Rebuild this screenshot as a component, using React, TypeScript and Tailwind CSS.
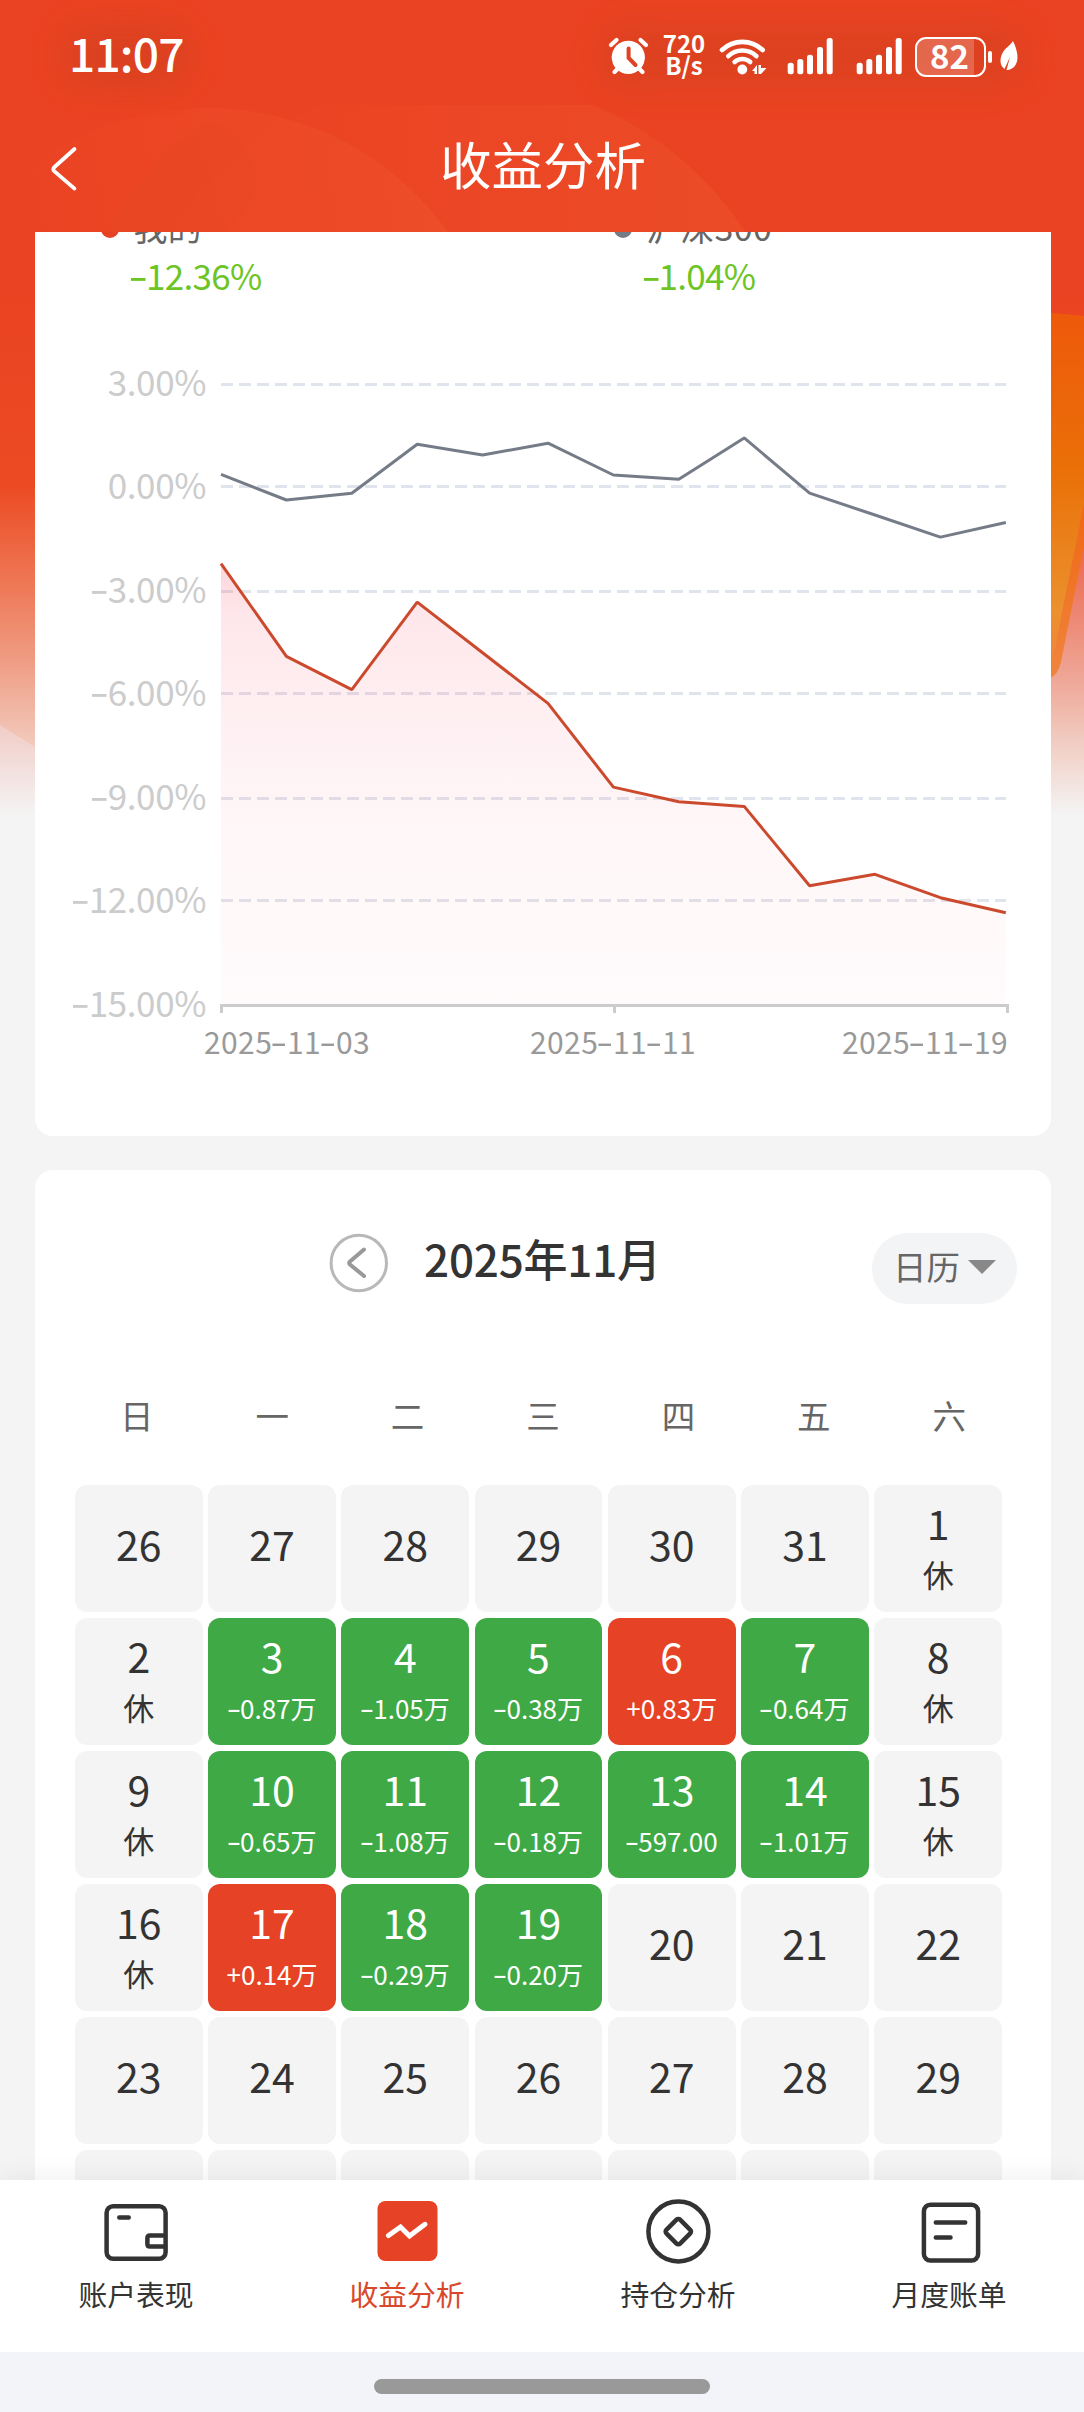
import React from "react";

const GRID = [
  { y: 384.5, label: "3.00%" },
  { y: 486.5, label: "0.00%" },
  { y: 591.5, label: "-3.00%" },
  { y: 693.5, label: "-6.00%" },
  { y: 798.5, label: "-9.00%" },
  { y: 900.5, label: "-12.00%" },
  { y: 1005.5, label: "-15.00%" },
];
const INDEX_Y = [474.3, 500, 493.2, 444.3, 455, 443.2, 475, 479.3, 437.9, 493.2, 515, 537.1, 522.5];
const MINE_Y = [563.6, 656.4, 689.6, 602.1, 652.8, 703.4, 787.1, 801.8, 806.4, 885.7, 874.3, 897.7, 912.7];
const toPoints = (ys: number[]) => ys.map((y, i) => `${(221 + i * 65.4).toFixed(1)},${y}`).join(" ");

const WEEKDAYS = ["日", "一", "二", "三", "四", "五", "六"];

type Day = { d: number; note?: string };
const DAYS: Day[] = [
  { d: 26 }, { d: 27 }, { d: 28 }, { d: 29 }, { d: 30 }, { d: 31 }, { d: 1, note: "休" },
  { d: 2, note: "休" }, { d: 3, note: "-0.87万" }, { d: 4, note: "-1.05万" }, { d: 5, note: "-0.38万" }, { d: 6, note: "+0.83万" }, { d: 7, note: "-0.64万" }, { d: 8, note: "休" },
  { d: 9, note: "休" }, { d: 10, note: "-0.65万" }, { d: 11, note: "-1.08万" }, { d: 12, note: "-0.18万" }, { d: 13, note: "-597.00" }, { d: 14, note: "-1.01万" }, { d: 15, note: "休" },
  { d: 16, note: "休" }, { d: 17, note: "+0.14万" }, { d: 18, note: "-0.29万" }, { d: 19, note: "-0.20万" }, { d: 20 }, { d: 21 }, { d: 22 },
  { d: 23 }, { d: 24 }, { d: 25 }, { d: 26 }, { d: 27 }, { d: 28 }, { d: 29 },
];

/* Hyphens are set in Inter and stretched a little, to read as a full-width minus. */
function Num({ text }: { text: string }) {
  return (
    <>
      {text.split(/(-)/).map((part, i) =>
        part === "-" ? (
          <span key={i} className="mr-[0.02em] inline-block scale-x-130 font-['Inter',sans-serif] leading-none">-</span>
        ) : (
          part
        )
      )}
    </>
  );
}

function Backdrop() {
  return (
    <svg className="absolute inset-0" width="1084" height="820" viewBox="0 0 1084 820">
      <defs>
        <linearGradient id="bg" x1="0" y1="0" x2="0" y2="820" gradientUnits="userSpaceOnUse">
          <stop offset="0" stopColor="#ea4323" />
          <stop offset="0.35" stopColor="#ea4323" />
          <stop offset="0.59" stopColor="#eb4a22" />
          <stop offset="0.7" stopColor="#ee7350" />
          <stop offset="0.8" stopColor="#ef9a80" />
          <stop offset="0.9" stopColor="#f2c6b8" />
          <stop offset="1" stopColor="#f4f4f4" />
        </linearGradient>
        <linearGradient id="fade" x1="0" y1="720" x2="0" y2="815" gradientUnits="userSpaceOnUse">
          <stop offset="0" stopColor="#f1cac3" />
          <stop offset="1" stopColor="#f4f4f4" />
        </linearGradient>
        <linearGradient id="rightFade" x1="0" y1="480" x2="0" y2="815" gradientUnits="userSpaceOnUse">
          <stop offset="0" stopColor="#ea4a2c" />
          <stop offset="0.3" stopColor="#ec7660" />
          <stop offset="0.6" stopColor="#efa898" />
          <stop offset="0.8" stopColor="#f1d0c6" />
          <stop offset="1" stopColor="#f4f4f4" />
        </linearGradient>
        <linearGradient id="band" x1="0" y1="313" x2="0" y2="677" gradientUnits="userSpaceOnUse">
          <stop offset="0" stopColor="#ee590b" />
          <stop offset="0.5" stopColor="#ef6512" />
          <stop offset="1" stopColor="#f0853d" />
        </linearGradient>
        <linearGradient id="bandInner" x1="0" y1="313" x2="0" y2="650" gradientUnits="userSpaceOnUse">
          <stop offset="0" stopColor="#ee590b" />
          <stop offset="0.47" stopColor="#ea7008" />
          <stop offset="0.88" stopColor="#eb912d" />
          <stop offset="1" stopColor="#ef873a" />
        </linearGradient>
        <linearGradient id="disc" x1="0" y1="232" x2="448" y2="150" gradientUnits="userSpaceOnUse">
          <stop offset="0" stopColor="#f2502f" stopOpacity="0" />
          <stop offset="1" stopColor="#f25a30" stopOpacity="0.4" />
        </linearGradient>
        <linearGradient id="discWide" x1="310" y1="0" x2="746" y2="0" gradientUnits="userSpaceOnUse">
          <stop offset="0" stopColor="#f2502f" stopOpacity="0.08" />
          <stop offset="1" stopColor="#ee5a2c" stopOpacity="0.4" />
        </linearGradient>
        <filter id="soft" x="-40%" y="-80%" width="180%" height="260%">
          <feGaussianBlur stdDeviation="16" />
        </filter>
        <clipPath id="below"><rect x="0" y="105" width="1084" height="127" /></clipPath>
      </defs>
      <rect width="1084" height="820" fill="url(#bg)" />
      <g clipPath="url(#below)">
        <circle cx="457" cy="423" r="346" fill="url(#discWide)" />
        <circle cx="207" cy="404" r="296" fill="url(#disc)" />
        <path d="M107 232C128 190 165 145 205 125H225C250 145 260 180 255 192C250 207 232 220 222 232Z" fill="#e04a22" opacity="0.13" />
      </g>
      <rect x="62" y="26" width="128" height="60" rx="28" fill="#c53f1c" opacity="0.42" filter="url(#soft)" />
      <rect x="600" y="26" width="425" height="60" rx="28" fill="#cc3f1c" opacity="0.45" filter="url(#soft)" />
      <path d="M0 725L35 747V820H0Z" fill="url(#fade)" />
      <rect x="1050" y="480" width="34" height="340" fill="url(#rightFade)" />
      <path d="M1050 313L1084 316V546L1061 662Q1058 675 1050 678Z" fill="url(#band)" />
      <path d="M1050 313L1084 316V504L1061 617L1054 655H1050Z" fill="url(#bandInner)" />
    </svg>
  );
}

function SignalBars() {
  return (
    <svg width="46" height="38" viewBox="787 37 46 38" fill="#fff">
      <rect x="787.7" y="62.7" width="6" height="11.5" rx="2.5" />
      <rect x="797.3" y="59" width="6" height="15.2" rx="2.5" />
      <rect x="807" y="54.7" width="6" height="19.5" rx="2.5" />
      <rect x="817" y="47" width="6" height="27.2" rx="2.5" />
      <rect x="826.7" y="38" width="6" height="36.2" rx="2.5" />
    </svg>
  );
}

function StatusBar() {
  return (
    <div className="flex h-[105px] items-start text-white">
      <div className="ml-[69px] mt-[22px] w-[539px] text-[46px] font-medium leading-[60px] tracking-[-0.8px]">11:07</div>
      <svg className="mt-[36px]" width="42" height="40" viewBox="608 36 42 40">
        <circle cx="628.3" cy="57.3" r="16.6" fill="#fff" />
        <path d="M611 45L616.5 40M646 45L640.5 40" stroke="#fff" strokeWidth="4.2" strokeLinecap="round" />
        <path d="M614.5 72L619 67.5M642.5 72L638 67.5" stroke="#fff" strokeWidth="4.2" strokeLinecap="round" />
        <path d="M628.6 48.5V58L635.5 65" stroke="#df4323" strokeWidth="4" fill="none" strokeLinecap="round" />
      </svg>
      <div className="ml-[11px] mt-[31px] flex w-[46px] flex-col items-center text-[24px] font-bold leading-[23px]">
        <span>720</span>
        <span className="-mt-px">B/s</span>
      </div>
      <svg className="ml-[11px] mt-[36px]" width="52" height="40" viewBox="718 36 52 40">
        <g fill="none" stroke="#fff" strokeWidth="4.6" strokeLinecap="round">
          <path d="M722 50A29.5 29.5 0 0 1 762.7 50" />
          <path d="M728.3 56.2A20.3 20.3 0 0 1 756.4 56.2" />
          <path d="M734.6 62A11.6 11.6 0 0 1 750.2 62" />
        </g>
        <circle cx="742.3" cy="69.5" r="4.9" fill="#fff" />
        <path d="M752 71L757 65V74H754.5V71ZM758.5 65H761V68H766.5L761 74H758.5Z" fill="#fff" />
      </svg>
      <div className="ml-[17px] mt-[37px]"><SignalBars /></div>
      <div className="ml-[22.5px] mt-[37px]"><SignalBars /></div>
      <div className="ml-[13px] mt-[37px] flex h-[40px] w-[71px] items-center justify-center rounded-[11px] border-[2.5px] border-white bg-linear-to-r from-white/20 from-85% to-transparent to-85% text-[33px] font-bold leading-[40px]">
        <span className="-mt-[5px] -ml-[1px]">82</span>
      </div>
      <div className="ml-[2px] mt-[51px] h-[12px] w-[4px] rounded-[2px] bg-white" />
      <svg className="ml-[7px] mt-[40px]" width="21" height="32" viewBox="999 40 21 32">
        <path d="M1013 41C1017 49 1019 58 1016 64C1014 68 1010 70 1006.500 70L1010 57L1004.500 69C1000 66 999.500 60 1002 54C1004.500 48 1010 46 1013 41Z" fill="#fff" />
      </svg>
    </div>
  );
}

function Chart() {
  return (
    <div>
      <div className="flex">
        <div className="w-[171px] pt-[18.5px] text-right text-[35px] tracking-[-0.4px] text-[#cccccc]">
          {GRID.map((g) => (
            <div key={g.label} className="h-[103.5px] whitespace-nowrap leading-[103.5px]"><Num text={g.label} /></div>
          ))}
        </div>
        <svg className="block" width="845" height="710" viewBox="206 310 845 710">
          <defs>
            <linearGradient id="area" x1="0" y1="563" x2="0" y2="1005" gradientUnits="userSpaceOnUse">
              <stop offset="0" stopColor="#f95570" stopOpacity="0.25" />
              <stop offset="0.12" stopColor="#f95570" stopOpacity="0.14" />
              <stop offset="0.35" stopColor="#f95570" stopOpacity="0.09" />
              <stop offset="0.6" stopColor="#f95570" stopOpacity="0.05" />
              <stop offset="1" stopColor="#f95570" stopOpacity="0.025" />
            </linearGradient>
          </defs>
          {GRID.slice(0, 6).map((g) => (
            <line key={g.label} x1="221" x2="1006" y1={g.y} y2={g.y} stroke="#e0e4ed" strokeWidth="3" strokeDasharray="12 6" />
          ))}
          <polygon points={`221,1005 ${toPoints(MINE_Y)} 1005.8,1005`} fill="url(#area)" />
          <path d="M221.500 1013V1005.500H1007.500V1013M614.500 1005.500V1013" fill="none" stroke="#cccccc" strokeWidth="3" />
          <polyline points={toPoints(INDEX_Y)} fill="none" stroke="#757b87" strokeWidth="3" strokeLinejoin="bevel" />
          <polyline points={toPoints(MINE_Y)} fill="none" stroke="#cb4a2d" strokeWidth="3" strokeLinejoin="bevel" />
        </svg>
      </div>
      <div className="-mt-[32px] flex h-[40px] justify-between pl-[169px] pr-[43px] text-[30px] leading-[40px] tracking-[0.4px] text-[#999999]">
        <span><Num text="2025-11-03" /></span>
        <span className="pl-[14px]"><Num text="2025-11-11" /></span>
        <span><Num text="2025-11-19" /></span>
      </div>
    </div>
  );
}

function Legend({ dot, name, value }: { dot: string; name: string; value: string }) {
  return (
    <div className="w-[512.5px] shrink-0">
      <div className="flex h-[40px] items-center text-[34px] leading-[40px] tracking-[0.3px] text-[#666666]">
        <span className={`mr-[14.5px] mt-[4px] size-[18px] rounded-full ${dot}`} />
        {name}
      </div>
      <div className="ml-[29px] mt-[8px] h-[40px] text-[35px] leading-[40px] tracking-[-0.7px] text-[#6cc524]"><Num text={value} /></div>
    </div>
  );
}

function DayCell({ day }: { day: Day }) {
  const rest = day.note === "休";
  const tone = !day.note || rest ? "bg-[#f4f4f4] text-[#333333]" : day.note.startsWith("+") ? "bg-[#e64225] text-white" : "bg-[#3ea945] text-white";
  return (
    <div className={`flex h-[127.100px] flex-col items-center rounded-[12px] ${tone}`}>
      <div className={`text-[41px] leading-[50px] ${day.note ? "mt-[12px]" : "mt-[33px]"}`}>{day.d}</div>
      {rest && <div className="mt-[7px] text-[31px] leading-[40px]">休</div>}
      {day.note && !rest && <div className="mt-[8px] h-[40px] whitespace-nowrap text-[26px] leading-[40px]"><Num text={day.note} /></div>}
    </div>
  );
}

const TABS = [
  {
    label: "账户表现",
    icon: (
      <>
        <rect x="106.600" y="2206.300" width="59" height="52.500" rx="6.500" />
        <path d="M119.300 2217.400H128.700M165 2235.500H150Q147.400 2235.500 147.400 2238V2244Q147.400 2246.600 150 2246.600H165" />
      </>
    ),
    box: "101 2196 70 70",
  },
  {
    label: "收益分析",
    active: true,
    icon: (
      <>
        <rect x="377" y="2201" width="60" height="60" rx="8" fill="#e64225" stroke="none" />
        <path d="M388 2235.500L400 2227L409 2236L424.500 2224.300" stroke="#fff" strokeWidth="5" />
      </>
    ),
    box: "371.500 2196 70 70",
  },
  {
    label: "持仓分析",
    icon: (
      <>
        <circle cx="678.400" cy="2231.500" r="30" />
        <rect x="668.600" y="2221.900" width="19.400" height="19.400" rx="2.500" transform="rotate(45 678.300 2231.600)" />
      </>
    ),
    box: "643 2196 70 70",
  },
  {
    label: "月度账单",
    icon: (
      <>
        <rect x="923.400" y="2204.700" width="54.200" height="55.800" rx="6.500" />
        <path d="M935.300 2222.400H964.700M935.300 2237.400H950" />
      </>
    ),
    box: "913.500 2196 70 70",
  },
];

export default function App() {
  return (
    <div className="relative flex h-[2412px] w-[1084px] flex-col overflow-hidden bg-[#f4f4f4] font-['Noto_Sans_CJK_SC',sans-serif]">
      <Backdrop />
      <div className="relative">
        <StatusBar />
        <header className="flex h-[127px] items-start text-white">
          <svg className="ml-[48px] mt-[39px]" width="32" height="50" viewBox="48 144 32 50">
            <path d="M74.500 149L54.500 167Q52 169.200 54.500 171.400L74.500 188.600" fill="none" stroke="#fff" strokeWidth="3.800" strokeLinecap="round" />
          </svg>
          <h1 className="ml-[360px] mt-[25px] text-[51.500px] font-normal leading-[66px]">收益分析</h1>
        </header>
      </div>

      <main className="relative flex h-[1948px] flex-col overflow-hidden pl-[35px] pr-[33px]">
        <section className="h-[904px] shrink-0 overflow-hidden rounded-b-[18px] bg-white">
          <div className="-mt-[25px] flex pl-[66px]">
            <Legend dot="bg-[#e64225]" name="我的" value="-12.36%" />
            <Legend dot="bg-[#757b87]" name="沪深300" value="-1.04%" />
          </div>
          <div className="mt-[15px]"><Chart /></div>
        </section>

        <section className="mt-[34px] h-[1100px] shrink-0 rounded-t-[18px] bg-white">
          <div className="flex items-start pt-[63px]">
            <svg className="ml-[294px]" width="60" height="60" viewBox="329 1233 60 60" fill="none">
              <circle cx="358.800" cy="1263" r="27.700" stroke="#b8b8b8" strokeWidth="3" />
              <path d="M364 1249.500L350 1261.500Q348.500 1263 350 1264.500L364 1276" stroke="#999999" strokeWidth="4" strokeLinecap="round" />
            </svg>
            <h2 className="ml-[35px] -mt-[2px] w-[448px] text-[44px] font-medium leading-[54px] tracking-[-0.2px] text-[#333333]">2025年11月</h2>
            <button className="flex h-[71px] w-[145px] items-center rounded-full bg-[#f3f4f6] pl-[21px] text-[33.500px] leading-[40px] text-[#666666]">
              <span className="-mt-[6px]">日历</span>
              <svg className="ml-[8px] -mt-[4px]" width="28" height="14" viewBox="0 0 28 14"><path d="M0 0H28L14 14Z" fill="#888888" /></svg>
            </button>
          </div>
          <div className="ml-[34px] mt-[91px] grid w-[948px] grid-cols-7 text-center text-[33.500px] leading-[40px] text-[#666666]">
            {WEEKDAYS.map((w) => <span key={w}>{w}</span>)}
          </div>
          <div className="ml-[40px] mt-[50px] grid w-[927px] grid-cols-7 gap-x-[5.500px] gap-y-[6px]">
            {DAYS.map((day, i) => <DayCell key={i} day={day} />)}
            {WEEKDAYS.map((w) => <div key={w} className="h-[127px] rounded-[12px] bg-[#f4f4f4]" />)}
          </div>
        </section>
      </main>

      <nav className="relative grid h-[172px] grid-cols-4 bg-white shadow-[0_-4px_24px_rgba(0,0,0,0.06)]">
        {TABS.map((t) => (
          <div key={t.label} className={`flex flex-col items-center pt-[16px] ${t.active ? "text-[#d9482b]" : "text-[#333333]"}`}>
            <svg width="70" height="70" viewBox={t.box} fill="none" stroke="#333333" strokeWidth="4.500" strokeLinecap="round">{t.icon}</svg>
            <span className="mt-[8px] pl-px text-[28.800px] leading-[40px]">{t.label}</span>
          </div>
        ))}
      </nav>
      <footer className="relative flex h-[60px] justify-center bg-[#f3f4f9] pt-[27px]">
        <div className="h-[15px] w-[336px] rounded-full bg-[#999999]" />
      </footer>
    </div>
  );
}
